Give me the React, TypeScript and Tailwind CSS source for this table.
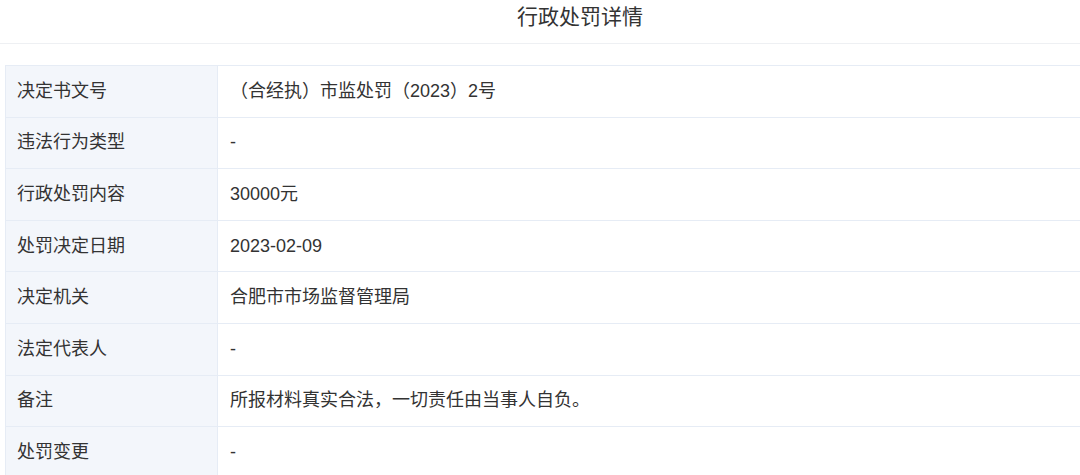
import React from 'react';

const rows: [string, string][] = [
  ['决定书文号', '（合经执）市监处罚（2023）2号'],
  ['违法行为类型', '-'],
  ['行政处罚内容', '30000元'],
  ['处罚决定日期', '2023-02-09'],
  ['决定机关', '合肥市市场监督管理局'],
  ['法定代表人', '-'],
  ['备注', '所报材料真实合法，一切责任由当事人自负。'],
  ['处罚变更', '-'],
];

export default function App() {
  return (
    <div
      className="h-[475px] w-[1080px] overflow-hidden bg-white text-[#333]"
      style={{ fontFamily: '"Liberation Sans", "Noto Sans CJK SC", sans-serif' }}
    >
      <div className="w-[1160px]">
        <div className="flex h-[44px] items-center justify-center border-b border-[#eef0f3] pb-[9px] text-[21px] text-[#333]">
          行政处罚详情
        </div>
        <div className="mx-[5px] mt-[21px] border-t border-l border-[#e6ecf5]">
          {rows.map(([label, value]) => (
            <div key={label} className="flex h-[51.6px] border-b border-[#e6ecf5] text-[18px]">
              <div className="flex w-[212px] shrink-0 items-center border-r border-[#e6ecf5] bg-[#f3f6fb] pl-[11px]">
                {label}
              </div>
              <div className="flex flex-1 items-center pl-[12px]">{value}</div>
            </div>
          ))}
        </div>
      </div>
    </div>
  );
}
